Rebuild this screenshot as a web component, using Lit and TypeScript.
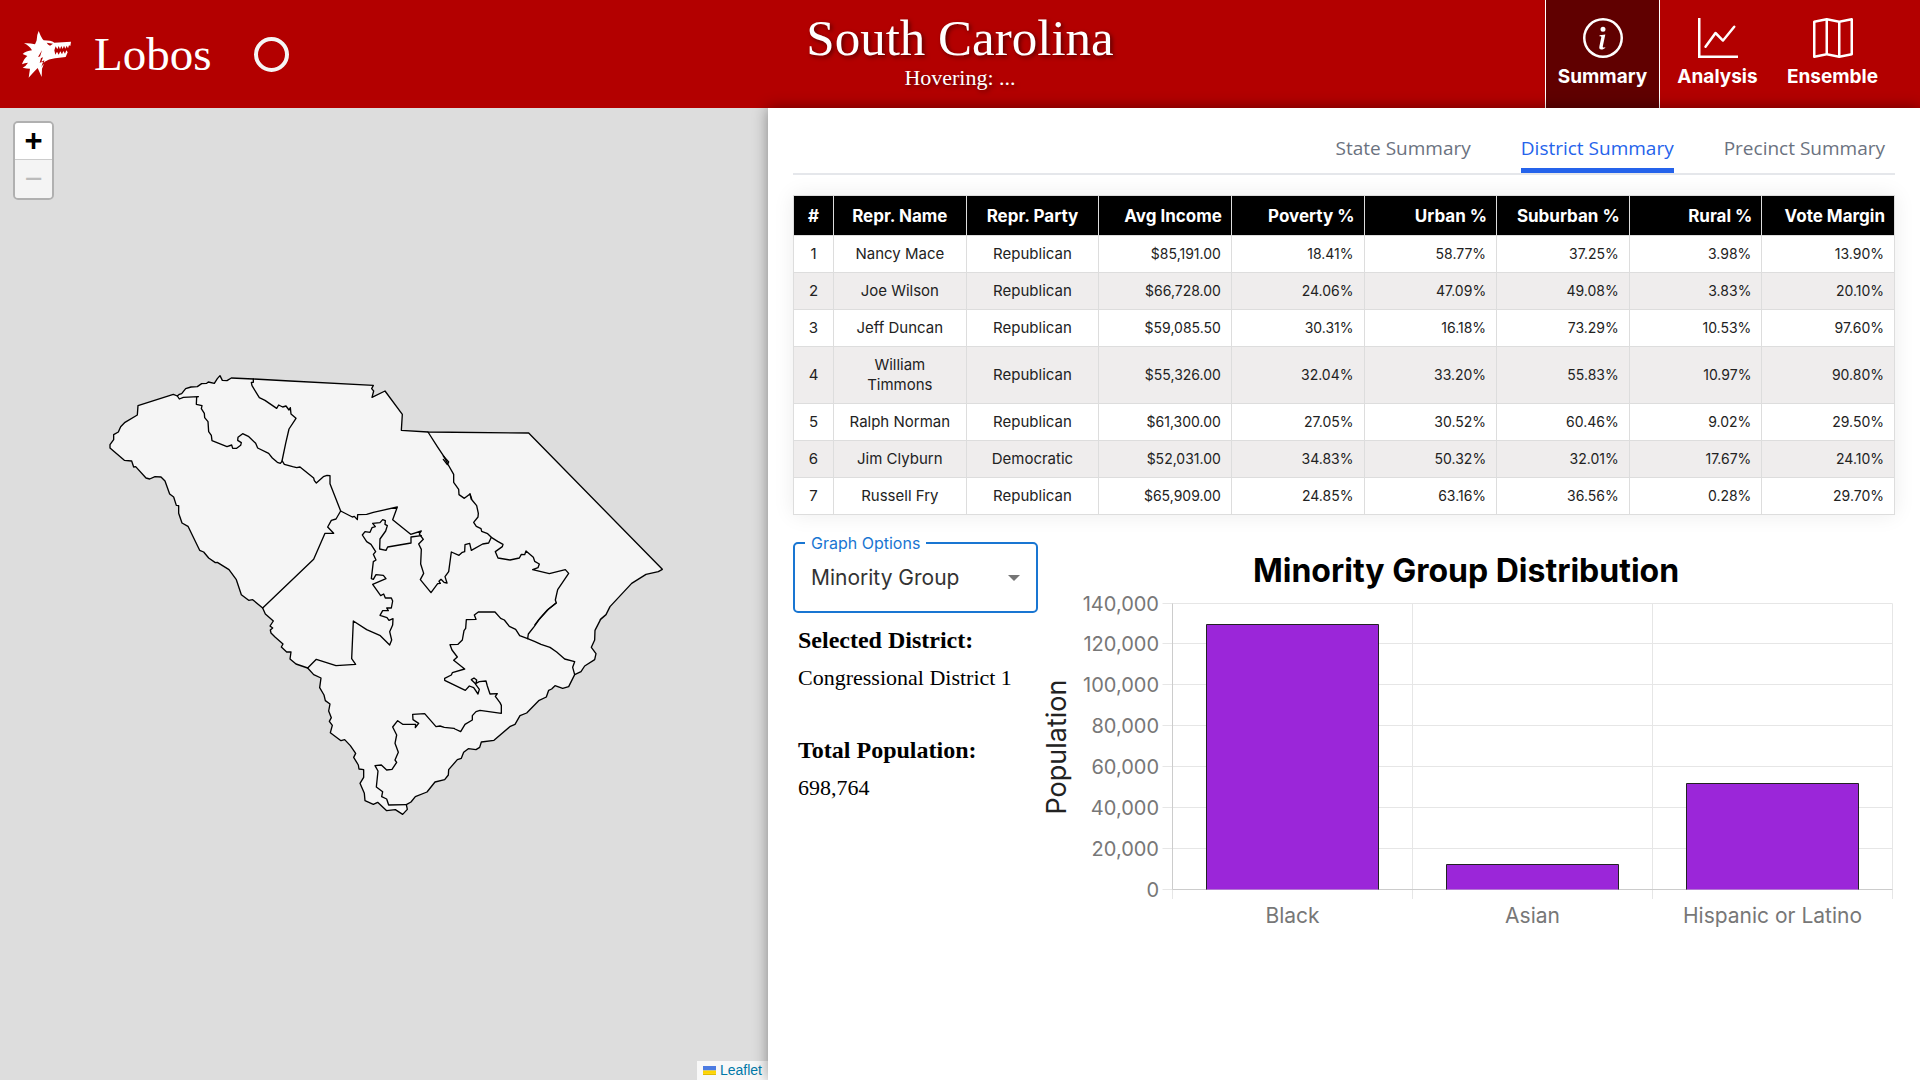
import { LitElement, html, css, svg } from "lit";
import { customElement, property, state } from "lit/decorators.js";
import { classMap } from "lit/directives/class-map.js";

/* ---------- data ---------- */

interface District {
  id: number;
  name: string;
  party: string;
  income: string;
  shares: string[];
}

const DISTRICTS: District[] = [
  { id: 1, name: "Nancy Mace", party: "Republican", income: "$85,191.00", shares: ["18.41%", "58.77%", "37.25%", "3.98%", "13.90%"] },
  { id: 2, name: "Joe Wilson", party: "Republican", income: "$66,728.00", shares: ["24.06%", "47.09%", "49.08%", "3.83%", "20.10%"] },
  { id: 3, name: "Jeff Duncan", party: "Republican", income: "$59,085.50", shares: ["30.31%", "16.18%", "73.29%", "10.53%", "97.60%"] },
  { id: 4, name: "William Timmons", party: "Republican", income: "$55,326.00", shares: ["32.04%", "33.20%", "55.83%", "10.97%", "90.80%"] },
  { id: 5, name: "Ralph Norman", party: "Republican", income: "$61,300.00", shares: ["27.05%", "30.52%", "60.46%", "9.02%", "29.50%"] },
  { id: 6, name: "Jim Clyburn", party: "Democratic", income: "$52,031.00", shares: ["34.83%", "50.32%", "32.01%", "17.67%", "24.10%"] },
  { id: 7, name: "Russell Fry", party: "Republican", income: "$65,909.00", shares: ["24.85%", "63.16%", "36.56%", "0.28%", "29.70%"] },
];

const COLUMNS = ["#", "Repr. Name", "Repr. Party", "Avg Income", "Poverty %", "Urban %", "Suburban %", "Rural %", "Vote Margin"];

const GROUPS = [
  { label: "Black", value: 129800 },
  { label: "Asian", value: 12300 },
  { label: "Hispanic or Latino", value: 52000 },
];

/* ---------- map geometry ---------- */

type Sheet = [number, number, string];

const NW: [number, number] = [270, 1080];
const NE: [number, number] = [1140, 1080];
const SW: [number, number] = [720, 1740];
const SE: [number, number] = [1320, 1680];
const on = (o: [number, number], points: string): Sheet => [o[0], o[1], points];

const join = (...sheets: Sheet[]) =>
  "M" +
  sheets
    .flatMap(([dx, dy, points]) =>
      points.trim().split(/\s+/).map((p) => {
        const [x, y] = p.split(",").map(Number);
        return `${x + dx} ${y + dy}`;
      })
    )
    .join("L");

const STATE =
  join(
    on(NW, "144,137 250,103 262,108 268,103 275,101 287,86 303,81 322,80 335,71 350,70 355,66 373,70 382,56 390,47 397,61 411,62 424,54 490,57 600,63 850,76 845,86 851,93 846,112 885,93"),
    on(NE, "15,93 67,163 64,211 144,216 446,219 847,628 835,635 798,643 755,670 690,740 678,764 660,780"),
    on(SE, "499,163 483,176 465,211 464,240 454,262 468,281 464,299 434,318 423,335 404,344 386,380 368,385 345,377 335,387 326,391 319,411 296,422 260,459 240,467 225,493 211,499 162,541 124,546 119,562 108,569 85,566 71,577 64,595 52,599 26,629 25,645 14,659"),
    on(SW, "585,606 561,636 526,650 513,666 499,674 502,688 488,703 466,689 440,692 413,667 400,673 375,662 373,640 360,610 371,592 371,569 357,567 355,555 341,532 347,520 331,497 314,479 303,482 271,458 277,436 268,424 274,413 266,393 270,372 256,362 252,345 239,323 243,294 221,284 203,264 168,252 150,237 153,216 140,216 124,201 129,192 105,171 93,159 91,150 98,144 90,138 100,123 76,102 68,84"),
    on(NW, "488,719 476,721 454,704 439,659 417,629 382,607 376,608 356,594 341,576 329,571 294,499 276,489 266,460 266,437 259,436 251,411 239,402 225,363 213,351 195,350 179,357 168,354 137,320 131,321 125,303 103,301 60,264 60,254 71,239 71,224 85,216 92,200 105,187 142,165")
  ) + "Z";

const BORDERS = [
  join(
    on(NW, "262,108 268,117 280,112 325,110 320,111 319,133 336,137 334,146 343,160 344,173 354,185 356,215 364,226 366,242 411,260 425,255 428,265 440,265 452,256 454,248 443,241 444,232 458,221 475,229 497,250 503,264 536,280 547,294 562,307 571,310 577,303 583,313 608,320 620,323 630,321 671,354 673,362 679,369 700,350 711,346 720,347 720,371 752,453 787,471 793,469 802,479 803,464 830,463 850,457 922,441 908,479"),
    on(NE, "92,523 124,513 118,522 130,538 116,552 124,568 122,612 131,640 121,659 153,698 173,671 181,670 177,664 183,658 192,667 201,669 195,650 206,635 214,576 237,586 247,577 254,575 255,554 269,550 274,571 308,552 326,549 334,532")
  ),
  join(on(NW, "490,57 490,67 484,67 486,77 508,113 525,121 538,130 560,145 566,135 578,141 588,138 597,150 601,143 603,162 618,175 597,207 587,250 576,303")),
  join(
    on(NE, "144,216 172,260 192,290 205,315 221,343 221,367 236,388 237,404 253,415 270,402 276,420 290,437 295,460 294,471 281,487 289,499 303,506 305,514 323,521 334,532 353,544 369,553 367,560 346,575 354,594 390,600 418,594 424,583 434,584 438,573 460,592 464,604 478,612 474,623 458,629 508,641 556,629 566,640 533,689 526,720 529,729 505,748 476,780"),
    on(SE, "283,199 265,222 263,236")
  ),
  join(on(NE, "190,288 206,306 202,314 190,298")),
  join(on(NE, "270,402 274,418")),
  join(on(SE, "348,129 322,150 302,172 285,194")),
  join(
    on(SE, "404,344 398,322 404,305 374,297 350,276 330,262 303,253 285,245 263,236 239,227 227,208 208,199 193,180 182,175 165,156 115,156 103,165 108,178 79,179 77,205 72,212 67,240 54,253 30,254 36,270 52,291 41,301 74,327 37,338 34,345 14,355 14,361 76,391 88,378 101,383 114,402 118,388 105,370 94,359 102,354 110,360 108,370 118,365 138,363 142,378 150,402 172,401 166,409 180,428 184,436 184,460 120,451 108,455 97,467 97,480 75,493 62,515 45,507 42,505 13,502 0,498"),
    on(SW, "588,440 554,401 518,403 519,419 536,430 526,443 527,433 488,433 473,422 458,441 470,465 465,490 475,517 465,540 470,547 456,568 440,570 424,555 405,557 414,573 409,621 428,635 425,650 440,657 446,675 499,674")
  ),
  join(on(NW, "518,744 671,598 705,520 731,520 713,501 724,481 738,477 752,453")),
  join(
    on(SW, "203,264 229,238 288,257 347,253 335,236 340,123 380,149 421,167 449,195 455,180 449,155 458,135 459,116 447,121 441,113 420,106 428,92 445,92 440,84 454,84 458,63 454,54 436,54 431,42 422,47 398,13"),
    on(NW, "888,656 880,646 858,644 850,658 844,656 850,605 858,600 850,583 857,575 843,553 830,545 817,525 825,515 840,517 846,503 856,500 848,490 870,488 878,479 886,482 885,493 892,497 887,513 870,537 869,567 888,571 893,561"),
    on(NE, "93,549 93,531 124,527")
  ),
];

/* ---------- icons ---------- */

const ICONS = {
  info: svg`<path d="M8 15A7 7 0 1 1 8 1a7 7 0 0 1 0 14m0 1A8 8 0 1 0 8 0a8 8 0 0 0 0 16"/><path d="m8.93 6.588-2.29.287-.082.38.45.083c.294.07.352.176.288.469l-.738 3.468c-.194.897.105 1.319.808 1.319.545 0 1.178-.252 1.465-.598l.088-.416c-.2.176-.492.246-.686.246-.275 0-.375-.193-.304-.533zM9 4.5a1 1 0 1 1-2 0 1 1 0 0 1 2 0"/>`,
  graph: svg`<path fill-rule="evenodd" d="M0 0h1v15h15v1H0zm14.817 3.113a.5.5 0 0 1 .07.704l-4.5 5.5a.5.5 0 0 1-.74.037L7.06 6.767l-3.656 5.027a.5.5 0 0 1-.808-.588l4-5.5a.5.5 0 0 1 .758-.06l2.609 2.61 4.15-5.073a.5.5 0 0 1 .704-.07"/>`,
  map: svg`<path fill-rule="evenodd" d="M15.817.113A.5.5 0 0 1 16 .5v14a.5.5 0 0 1-.402.49l-5 1a.5.5 0 0 1-.196 0L5.5 15.01l-4.902.98A.5.5 0 0 1 0 15.5v-14a.5.5 0 0 1 .402-.49l5-1a.5.5 0 0 1 .196 0L10.5.99l4.902-.98a.5.5 0 0 1 .415.103M10 1.91l-4-.8v12.98l4 .8zm1 12.98 4-.8V1.11l-4 .8zm-6-.8V1.11l-4 .8v12.98z"/>`,
};

/* ---------- header ---------- */

@customElement("site-header")
export class SiteHeader extends LitElement {
  @property() heading = "";
  @state() private active = "Summary";

  static styles = css`
    :host {
      display: grid;
      grid-template-columns: 1fr auto 1fr;
      height: 108px;
      background: #b30000;
      color: #fff;
      font-family: "Liberation Serif", serif;
    }
    .brand {
      display: flex;
      align-items: center;
      padding-left: 22px;
      font-size: 47px;
      line-height: 60px;
    }
    .wolf {
      width: 49px;
      height: 47px;
      margin-right: 23px;
    }
    .ring {
      width: 27px;
      height: 27px;
      margin-left: 42px;
      border: 4px solid #f5f5f5;
      border-radius: 50%;
    }
    .title {
      display: flex;
      flex-direction: column;
      justify-content: center;
      padding-bottom: 2px;
      text-align: center;
      text-shadow: 2px 2px 4px rgba(0, 0, 0, 0.5);
    }
    h1 {
      margin: 0;
      font-size: 51px;
      font-weight: 400;
      line-height: 50px;
    }
    .hover {
      font-size: 22px;
      line-height: 30px;
    }
    nav {
      display: flex;
      justify-content: flex-end;
      padding-right: 30px;
    }
    .nav {
      display: flex;
      flex-direction: column;
      align-items: center;
      gap: 7px;
      width: 115px;
      padding: 18px 0 0;
      border: 0;
      background: none;
      color: inherit;
      font: 700 19px/24px Inter, sans-serif;
      cursor: pointer;
    }
    .nav svg {
      width: 40px;
      height: 40px;
      fill: currentColor;
    }
    .nav.on {
      background: #600000;
      border: solid #fff;
      border-width: 0 1px;
    }
  `;

  render() {
    const items = [
      { label: "Summary", icon: ICONS.info },
      { label: "Analysis", icon: ICONS.graph },
      { label: "Ensemble", icon: ICONS.map },
    ];
    return html`
      <div class="brand">
        <svg class="wolf" viewBox="66 94 147 141" fill="#fff" aria-hidden="true">
          <path d="M116 94L122 108Q127 118 131 122L150 123Q158 125 163 129L213 126L211 139L207 137L204 146L200 138L196 147L192 138L188 148L184 139L180 149L176 139L172 149L167 140L163 152L166 165L171 156L176 165L181 155L186 164L190 154L195 162L199 152L203 158L197 172L165 176Q145 179 134 186L131 190L133 182L124 186L129 173L118 177L126 152L114 172L125 169L119 189L129 186L124 202L131 192Q130 200 126 207L125 232L113 205Q104 214 86 234L90 207Q80 207 68 204Q78 199 84 189Q74 190 66 194Q72 176 82 169L68 163Q78 154 96 152Q88 138 72 131Q86 129 105 134Q108 128 110 122Q110 106 116 94Z" />
          <path d="M140 129L159 132L150 138Q143 135 140 129Z" fill="#b30000" />
        </svg>
        <span>Lobos</span>
        <span class="ring" role="status" aria-label="Loading"></span>
      </div>
      <div class="title">
        <h1>${this.heading}</h1>
        <div class="hover">Hovering: ...</div>
      </div>
      <nav>
        ${items.map(
          (i) => html`<button
            class=${classMap({ nav: true, on: i.label === this.active })}
            @click=${() => (this.active = i.label)}
          >
            <svg viewBox="0 0 16 16" aria-hidden="true">${i.icon}</svg>${i.label}
          </button>`
        )}
      </nav>
    `;
  }
}

/* ---------- map ---------- */

@customElement("district-map")
export class DistrictMap extends LitElement {
  static styles = css`
    :host {
      display: block;
      position: relative;
      background: #ddd;
      overflow: hidden;
    }
    .canvas {
      position: absolute;
      inset: 0;
      width: 100%;
      height: 100%;
      stroke: #000;
      stroke-width: 4;
      stroke-linejoin: round;
      stroke-linecap: round;
    }
    .zoom {
      position: absolute;
      left: 13px;
      top: 13px;
      display: flex;
      flex-direction: column;
      border: 2px solid rgba(0, 0, 0, 0.2);
      border-radius: 5px;
      background-clip: padding-box;
    }
    .zoom button {
      width: 37px;
      height: 37px;
      padding: 3px 0 0;
      border: 0;
      background: #fff;
      color: #000;
      font: 700 31px/34px "Liberation Mono", monospace;
    }
    .zoom .in {
      border-bottom: 1px solid #ccc;
      border-radius: 3px 3px 0 0;
    }
    .zoom .out {
      height: 38px;
      border-radius: 0 0 3px 3px;
      background: #f4f4f4;
      color: #bbb;
      font-weight: 400;
    }
    .credit {
      position: absolute;
      right: 0;
      bottom: 0;
      display: flex;
      align-items: center;
      gap: 4px;
      padding: 0 6px;
      background: rgba(255, 255, 255, 0.8);
      font: 14px/19px "Liberation Sans", sans-serif;
    }
    .credit a {
      color: #0078a8;
      text-decoration: none;
    }
    .flag {
      width: 13px;
      height: 9px;
    }
  `;

  render() {
    return html`
      <svg class="canvas" viewBox="0 324 2304 2916" role="img" aria-label="Congressional districts">
        <path d=${STATE} fill="#f5f5f5" />
        ${BORDERS.map((d) => svg`<path d=${d} fill="none" />`)}
      </svg>
      <div class="zoom">
        <button class="in" aria-label="Zoom in">+</button>
        <button class="out" aria-label="Zoom out" disabled>−</button>
      </div>
      <div class="credit">
        <svg class="flag" viewBox="0 0 12 8" preserveAspectRatio="none" aria-hidden="true">
          <path fill="#4C7BE1" d="M0 0h12v4H0z" />
          <path fill="#FFD500" d="M0 4h12v3H0z" />
          <path fill="#E0BC00" d="M0 7h12v1H0z" />
        </svg>
        <a href="#leaflet">Leaflet</a>
      </div>
    `;
  }
}

/* ---------- chart ---------- */

@customElement("group-chart")
export class GroupChart extends LitElement {
  static styles = css`
    :host {
      display: block;
      padding-top: 9px;
    }
    svg {
      display: block;
      width: 100%;
      font-family: Inter, sans-serif;
    }
    .heading {
      font-size: 32px;
      font-weight: 700;
      text-anchor: middle;
    }
    .axis {
      font-size: 27px;
      fill: #222;
      text-anchor: middle;
    }
    .tick {
      font-size: 20px;
      fill: #777;
    }
    .y {
      text-anchor: end;
    }
    .x {
      font-size: 21px;
      text-anchor: middle;
    }
    .grid {
      stroke: #e6e6e6;
    }
    .base {
      fill: none;
      stroke: #ccc;
    }
    .bar {
      fill: #9b26d9;
    }
    .edge {
      fill: none;
      stroke: #222;
      stroke-width: 1;
    }
  `;

  render() {
    const left = 134.5;
    const band = 240;
    const zero = 346.5;
    const unit = 286 / 140000;
    const ticks = [0, 20000, 40000, 60000, 80000, 100000, 120000, 140000];
    return html`
      <svg viewBox="0 0 857 400" role="img" aria-label="Minority Group Distribution">
        <text class="heading" x="428" y="39">Minority Group Distribution</text>
        <text class="axis" transform="translate(28 204) rotate(-90)">Population</text>
        ${ticks.map((t) => {
          const y = Math.round(zero - t * unit) - 0.5;
          return svg`
            <path class="grid" d="M${left - 10} ${y}H${left + 3 * band}" />
            <text class="tick y" x="121" y=${y + 7}>${t.toLocaleString("en-US")}</text>`;
        })}
        ${[0, 1, 2, 3].map((i) => svg`<path class="grid" d="M${left + i * band} 60.5V356" />`)}
        <path class="base" d="M${left} 60.5V${zero}H${left + 3 * band}" />
        ${GROUPS.map((g, i) => {
          const x = left + i * band + 34;
          const h = Math.round(g.value * unit);
          return svg`
            <rect class="bar" x=${x} y=${zero - h} width="172" height=${h} />
            <path class="edge" d="M${x} ${zero}v${-h}h172v${h}" />
            <text class="tick x" x=${x + 86} y="380">${g.label}</text>`;
        })}
      </svg>
    `;
  }
}

/* ---------- summary panel ---------- */

@customElement("summary-panel")
export class SummaryPanel extends LitElement {
  @state() private tab = "District Summary";

  static styles = css`
    :host {
      display: block;
      position: relative;
      padding: 17px 25px 25px;
      background: #fff;
      box-shadow: 0 0 14px rgba(0, 0, 0, 0.4);
      font-family: Inter, sans-serif;
    }
    .tabs {
      display: flex;
      justify-content: flex-end;
      gap: 50px;
      padding-right: 10px;
      border-bottom: 2px solid #e5e7eb;
    }
    .tab {
      height: 48px;
      padding: 4px 0 0;
      border: 0;
      border-bottom: 5px solid transparent;
      background: none;
      color: #6b7280;
      font: 19px/39px "Open Sans", sans-serif;
      cursor: pointer;
    }
    .tab.on {
      border-color: #2563eb;
      color: #2563eb;
    }
    table {
      width: 100%;
      margin: 20px 0 19px;
      border-collapse: collapse;
      table-layout: fixed;
      box-shadow: 0 0 20px rgba(0, 0, 0, 0.08);
      color: #222;
      font-size: 14px;
      line-height: 20px;
    }
    th,
    td {
      padding: 8px 10px;
      border: 1px solid #ddd;
      text-align: right;
      font-weight: 400;
    }
    .id {
      width: 40px;
      padding: 8px 0;
      box-sizing: border-box;
    }
    .mid {
      text-align: center;
    }
    td.mid {
      font-size: 15px;
    }
    thead th {
      padding: 10px 9px 9px;
      background: #000;
      color: #fff;
      font-size: 17px;
      font-weight: 700;
      white-space: nowrap;
    }
    tbody tr:nth-child(even) {
      background: #efeded;
    }
    .lower {
      display: grid;
      grid-template-columns: 245px 1fr;
    }
    fieldset {
      position: relative;
      margin: 0;
      padding: 0;
      border: 2px solid #1976d2;
      border-radius: 5px;
      min-width: 0;
    }
    legend {
      height: 18px;
      margin-left: 10px;
      padding: 0 6px;
      color: #1976d2;
      font-size: 16px;
      line-height: 18px;
    }
    select {
      display: block;
      width: 100%;
      height: 59px;
      margin: 0;
      padding: 0 44px 7px 16px;
      border: 0;
      outline: 0;
      appearance: none;
      background: none;
      color: #333;
      font: 21px/28px Inter, sans-serif;
    }
    .arrow {
      position: absolute;
      right: 16px;
      top: 23px;
      width: 12px;
      height: 6px;
      fill: #757575;
      pointer-events: none;
    }
    .facts {
      margin: 0;
      padding: 9px 5px;
      font-family: "Liberation Serif", serif;
      font-size: 22px;
      line-height: 37px;
      white-space: nowrap;
    }
    dt {
      font-size: 24px;
      font-weight: 700;
    }
    dd {
      margin: 0 0 36px;
    }
  `;

  render() {
    return html`
      <div class="tabs" role="tablist">
        ${["State Summary", "District Summary", "Precinct Summary"].map(
          (t) => html`<button
            role="tab"
            aria-selected=${t === this.tab}
            class=${classMap({ tab: true, on: t === this.tab })}
            @click=${() => (this.tab = t)}
          >${t}</button>`
        )}
      </div>
      <table>
        <thead>
          <tr>
            ${COLUMNS.map((c, i) => html`<th scope="col" class=${classMap({ id: i === 0, mid: i < 3 })}>${c}</th>`)}
          </tr>
        </thead>
        <tbody>
          ${DISTRICTS.map(
            (d) => html`<tr>
              <td class="id mid">${d.id}</td>
              <td class="mid">${d.name}</td>
              <td class="mid">${d.party}</td>
              <td>${d.income}</td>
              ${d.shares.map((s) => html`<td>${s}</td>`)}
            </tr>`
          )}
        </tbody>
      </table>
      <div class="lower">
        <div>
          <fieldset>
            <legend><label for="graph">Graph Options</label></legend>
            <select id="graph">
              <option>Minority Group</option>
            </select>
            <svg class="arrow" viewBox="0 0 12 6" aria-hidden="true"><path d="M0 0h12L6 6z" /></svg>
          </fieldset>
          <dl class="facts">
            <dt>Selected District:</dt>
            <dd>Congressional District 1</dd>
            <dt>Total Population:</dt>
            <dd>698,764</dd>
          </dl>
        </div>
        <group-chart></group-chart>
      </div>
    `;
  }
}

/* ---------- page ---------- */

@customElement("app-root")
export class AppRoot extends LitElement {
  static styles = css`
    :host {
      display: flex;
      flex-direction: column;
      min-height: 100vh;
      overflow: hidden;
    }
    .main {
      flex: 1;
      display: grid;
      grid-template-columns: 2fr 3fr;
    }
  `;

  render() {
    return html`
      <site-header heading="South Carolina"></site-header>
      <main class="main">
        <district-map></district-map>
        <summary-panel></summary-panel>
      </main>
    `;
  }
}
